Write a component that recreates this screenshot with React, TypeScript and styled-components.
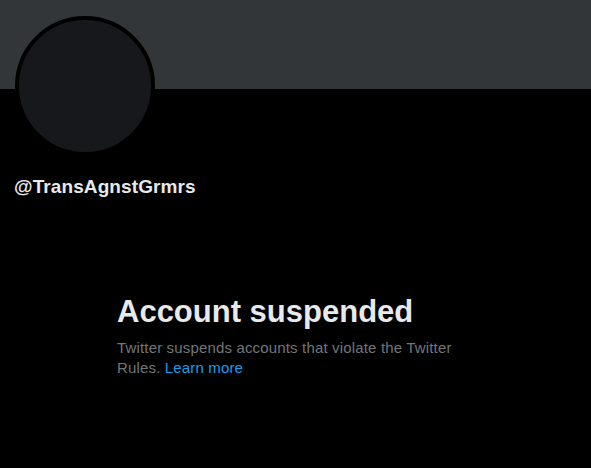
import styled, { createGlobalStyle } from "styled-components";

const GlobalStyle = createGlobalStyle`
  html, body {
    margin: 0;
    padding: 0;
    background: #000;
  }
  body {
    font-family: "Liberation Sans", Arial, sans-serif;
    color: #e7e9ea;
  }
`;

const Page = styled.div`
  width: 591px;
  height: 468px;
  overflow: hidden;
  background: #000;
`;

const Banner = styled.div`
  height: 89px;
  background: #333639;
`;

const Header = styled.div`
  padding: 0 14px;
`;

const Avatar = styled.div`
  width: 132px;
  height: 132px;
  margin-top: -73px;
  margin-left: 1px;
  border-radius: 50%;
  border: 4px solid #000;
  background: #16181c;
`;

const Handle = styled.div`
  margin-top: 19px;
  font-size: 19px;
  font-weight: 700;
  line-height: 24px;
  color: #e7e9ea;
  letter-spacing: 0.1px;
`;

const Empty = styled.div`
  margin: 95px 0 0 117px;
  width: 345px;
`;

const Title = styled.h1`
  margin: 0 0 8px;
  font-size: 31px;
  font-weight: 700;
  line-height: 36px;
  color: #e7e9ea;
`;

const Text = styled.p`
  margin: 0;
  font-size: 15px;
  line-height: 20px;
  color: #71767b;
  letter-spacing: 0.16px;
`;

const Link = styled.a`
  color: #1d9bf0;
  text-decoration: none;
`;

export default function App() {
  return (
    <Page>
      <GlobalStyle />
      <Banner />
      <Header>
        <Avatar />
        <Handle>@TransAgnstGrmrs</Handle>
      </Header>
      <Empty>
        <Title>Account suspended</Title>
        <Text>
          Twitter suspends accounts that violate the Twitter Rules.{" "}
          <Link href="#">Learn more</Link>
        </Text>
      </Empty>
    </Page>
  );
}
